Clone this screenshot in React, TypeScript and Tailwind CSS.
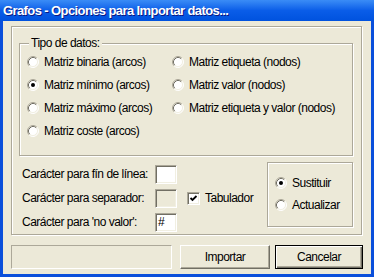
import type { ReactNode } from 'react';

const FONT = "font-['Liberation_Sans',Arial,sans-serif]";

// Classic Windows radio button, 12x12
function RadioDot({ checked }: { checked?: boolean }) {
  return (
    <svg width="12" height="12" viewBox="0 0 12 12" className="shrink-0">
      <circle cx="6" cy="6" r="5" fill="#fff" />
      <path d="M2.11 9.89 A5.5 5.5 0 0 1 9.89 2.11" fill="none" stroke="#ACA899" strokeWidth="1" />
      <path d="M9.89 2.11 A5.5 5.5 0 0 1 2.11 9.89" fill="none" stroke="#fff" strokeWidth="1" />
      <path d="M2.82 9.18 A4.5 4.5 0 0 1 9.18 2.82" fill="none" stroke="#716F64" strokeWidth="1" />
      <path d="M9.18 2.82 A4.5 4.5 0 0 1 2.82 9.18" fill="none" stroke="#F1EFE2" strokeWidth="1" />
      {checked && <circle cx="6" cy="6" r="2" fill="#000" />}
    </svg>
  );
}

function Radio({ label, checked }: { label: string; checked?: boolean }) {
  return (
    <div className="flex items-center gap-[5px] h-[23px]">
      <RadioDot checked={checked} />
      <span className="whitespace-nowrap">{label}</span>
    </div>
  );
}

function EditBox({ value, disabled }: { value?: string; disabled?: boolean }) {
  return (
    <div
      className={
        'w-[22px] h-[19px] border border-t-[#ACA899] border-l-[#ACA899] border-b-white border-r-white ' +
        'shadow-[inset_1px_1px_0_#716F64,inset_-1px_-1px_0_#F1EFE2] flex items-center pl-[2px] ' +
        (disabled ? 'bg-[#ECE9D8]' : 'bg-white')
      }
    >
      {value}
    </div>
  );
}

function GroupFrame({ className, children }: { className: string; children: ReactNode }) {
  return (
    <div className={'border border-[#ACA899] shadow-[inset_1px_1px_0_#fff,1px_1px_0_#fff] ' + className}>
      {children}
    </div>
  );
}

export default function App() {
  return (
    <div className={`w-[374px] h-[277px] bg-[#0A4FDB] flex flex-col overflow-hidden text-[12px] tracking-[-0.5px] text-black ${FONT}`}>
      {/* Title bar */}
      <div className="h-[21px] shrink-0 bg-gradient-to-b from-[#3A8CF6] via-[#0A5DE8] to-[#0052DE] flex items-center px-[3px]">
        <span className="text-white font-bold text-[13px] tracking-[-0.6px] [text-shadow:1px_1px_0_#0A1883] whitespace-nowrap">
          Grafos - Opciones para Importar datos...
        </span>
      </div>

      {/* Body */}
      <div className="flex-1 mx-[3px] mb-[3px] bg-[#ECE9D8] flex flex-col pt-[5px] pl-[8px]">
        <GroupFrame className="w-[351px] h-[209px] flex flex-col pl-[7px] pr-[8px]">
          {/* Tipo de datos */}
          <GroupFrame className="relative mt-[16px] h-[113px] shrink-0">
            <span className="absolute -top-[9px] left-[9px] px-[2px] bg-[#ECE9D8] leading-[16px]">Tipo de datos:</span>
            <div className="grid grid-cols-[145px_1fr] pl-[7px] pt-[6px]">
              <Radio label="Matriz binaria (arcos)" />
              <Radio label="Matriz etiqueta (nodos)" />
              <Radio label="Matriz mínimo (arcos)" checked />
              <Radio label="Matriz valor (nodos)" />
              <Radio label="Matriz máximo (arcos)" />
              <Radio label="Matriz etiqueta y valor (nodos)" />
              <Radio label="Matriz coste (arcos)" />
            </div>
          </GroupFrame>

          {/* Separators */}
          <div className="flex mt-[6px]">
            <div className="flex flex-col pl-[3px]">
              <div className="flex items-center h-[24px]">
                <span className="w-[133px] whitespace-nowrap">Carácter para fín de línea:</span>
                <EditBox />
              </div>
              <div className="flex items-center h-[24px]">
                <span className="w-[133px] whitespace-nowrap">Carácter para separador:</span>
                <EditBox disabled />
                <div className="ml-[10px] w-[13px] h-[13px] bg-white border border-t-[#ACA899] border-l-[#ACA899] border-b-white border-r-white shadow-[inset_1px_1px_0_#716F64,inset_-1px_-1px_0_#F1EFE2] flex items-center justify-center">
                  <svg width="9" height="9" viewBox="0 0 9 9">
                    <path d="M1.5 4 L3.5 6 L7.5 2" fill="none" stroke="#000" strokeWidth="1.8" />
                  </svg>
                </div>
                <span className="ml-[5px]">Tabulador</span>
              </div>
              <div className="flex items-center h-[24px]">
                <span className="w-[133px] whitespace-nowrap">Carácter para 'no valor':</span>
                <EditBox value="#" />
              </div>
            </div>

            <GroupFrame className="ml-auto w-[86px] h-[65px] flex flex-col pt-[9px] pl-[7px]">
              <div className="flex items-center gap-[5px] h-[22px]">
                <RadioDot checked />
                <span>Sustituir</span>
              </div>
              <div className="flex items-center gap-[5px] h-[22px]">
                <RadioDot />
                <span>Actualizar</span>
              </div>
            </GroupFrame>
          </div>
        </GroupFrame>

        {/* Status + buttons */}
        <div className="flex mt-[10px]">
          <div className="w-[161px] h-[24px] border border-t-[#ACA899] border-l-[#ACA899] border-b-white border-r-white" />
          <button className="ml-[8px] w-[90px] h-[24px] border border-t-white border-l-white border-b-[#716F64] border-r-[#716F64] shadow-[inset_-1px_-1px_0_#ACA899] flex items-center justify-center">
            Importar
          </button>
          <button className="ml-[5px] w-[88px] h-[24px] border border-black shadow-[inset_1px_1px_0_#fff,inset_-1px_-1px_0_#716F64,inset_-2px_-2px_0_#ACA899] flex items-center justify-center">
            Cancelar
          </button>
        </div>
      </div>
    </div>
  );
}
